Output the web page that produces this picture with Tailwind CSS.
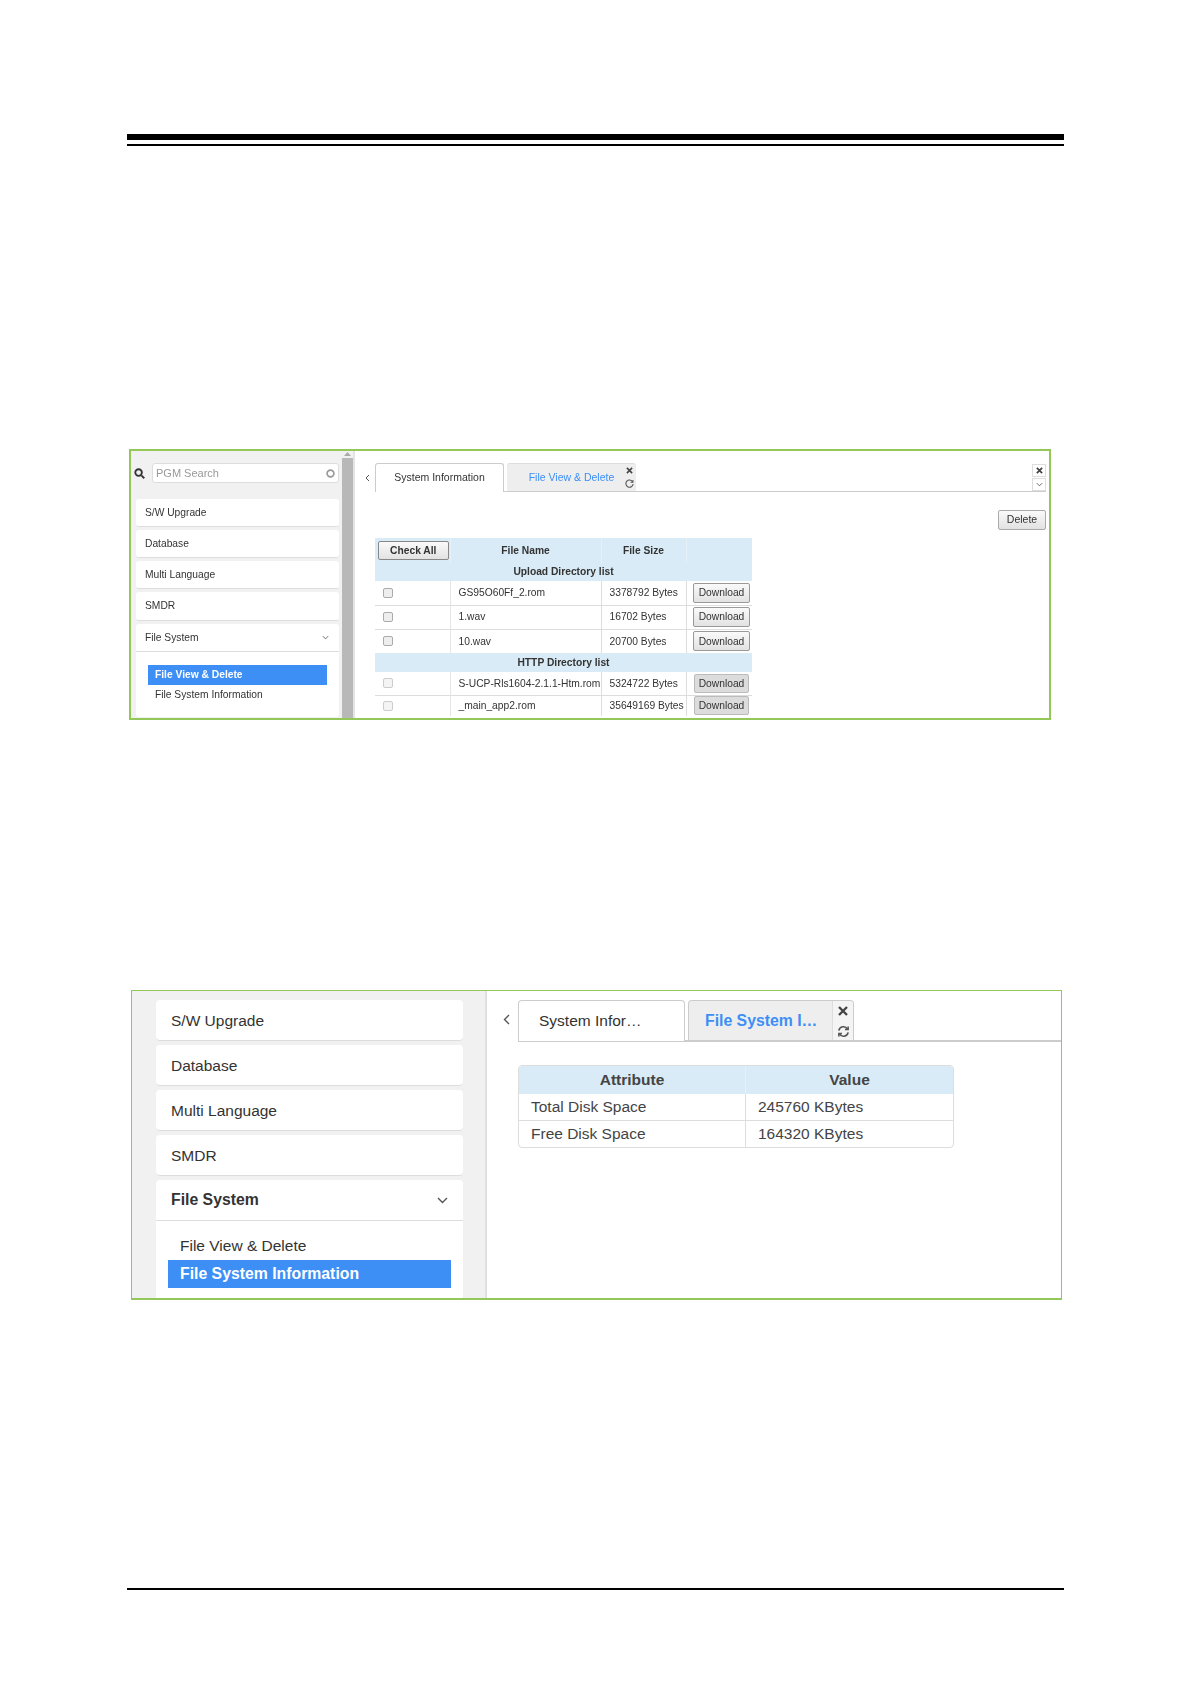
<!DOCTYPE html>
<html lang="en">
<head>
    <meta charset="UTF-8">
    <title>File System</title>
    <script src="https://cdn.jsdelivr.net/npm/@tailwindcss/browser@4"></script>
</head>
<body class="bg-white font-['Liberation_Sans',Arial,sans-serif] text-[#333]">
    <div class="w-[1191px] h-[1684px] pt-[134px] overflow-hidden">
        <!-- page header rule -->
        <div class="mx-[127px] h-[6px] bg-black"></div>
        <div class="mx-[127px] mt-[4px] h-[2px] bg-black"></div>

        <!-- File View & Delete -->
        <div class="ml-[129px] mt-[303px] w-[922px] h-[271px] border-2 border-[#93c757] flex overflow-hidden text-[10.25px]">
            <div class="w-[211px] bg-[#f1f1f1] pl-[5px] pr-[3px] pt-[12px] shrink-0 blur-[0.3px]">
                <div class="flex items-center h-[20px] ml-[-2px]">
                    <svg class="w-[11px] h-[11px] shrink-0" viewBox="0 0 12 12" fill="none" stroke="#333" stroke-width="2"><circle cx="5" cy="5" r="3.6"/><path d="M8 8l3.2 3.2"/></svg>
                    <div class="ml-[7px] flex-1 h-[20px] bg-white border border-[#ddd] rounded-[3px] flex items-center justify-between pl-[3px] pr-[3px] text-[11px] text-[#999]">
                        <span>PGM Search</span>
                        <svg class="w-[9px] h-[9px]" viewBox="0 0 10 10" fill="none" stroke="#999" stroke-width="1.8"><circle cx="5" cy="5" r="3.8"/></svg>
                    </div>
                </div>
                <div class="mt-[16px] flex flex-col gap-[3px]">
                    <div class="h-[28px] bg-white rounded-[3px] border-b border-[#ddd] flex items-center pl-[9px]">S/W Upgrade</div>
                    <div class="h-[28px] bg-white rounded-[3px] border-b border-[#ddd] flex items-center pl-[9px]">Database</div>
                    <div class="h-[28px] bg-white rounded-[3px] border-b border-[#ddd] flex items-center pl-[9px]">Multi Language</div>
                    <div class="h-[29px] bg-white rounded-[3px] border-b border-[#ddd] flex items-center pl-[9px]">SMDR</div>
                    <div class="bg-white rounded-[3px] h-[93px]">
                        <div class="h-[28px] border-b border-[#ddd] flex items-center justify-between pl-[9px] pr-[10px]">
                            <span>File System</span>
                            <svg class="w-[7px] h-[5px]" viewBox="0 0 8 5" fill="none" stroke="#555"><path d="M1 1l3 3 3-3"/></svg>
                        </div>
                        <div class="mt-[13px] mx-[12px] h-[20px] bg-[#3d8ff5] text-white font-bold flex items-center pl-[7px]">File View &amp; Delete</div>
                        <div class="mx-[12px] h-[20px] flex items-center pl-[7px]">File System Information</div>
                    </div>
                </div>
            </div>
            <div class="w-[11px] bg-[#f1f1f1] shrink-0 flex flex-col">
                <div class="h-[7px] flex justify-center pt-[1px]">
                    <svg class="w-[7px] h-[4px]" viewBox="0 0 7 4"><path d="M3.5 0L7 4H0z" fill="#aaa"/></svg>
                </div>
                <div class="flex-1 bg-[#b8b8b8]"></div>
            </div>
            <div class="w-[2px] bg-[#e4e4e4] shrink-0"></div>
            <div class="flex-1 pt-[12px] pl-[20px] pr-[3px] blur-[0.3px]">
                <div class="relative flex h-[29px] border-b border-[#ccc] text-[10.5px]">
                    <svg class="absolute left-[-10px] top-[11px] w-[5px] h-[8px]" viewBox="0 0 5 8" fill="none" stroke="#555"><path d="M4 1L1 4l3 3"/></svg>
                    <div class="w-[129px] h-[29px] bg-white border border-[#ccc] border-b-0 rounded-t-[3px] flex items-center justify-center">System Information</div>
                    <div class="ml-[3px] w-[129px] h-[28px] bg-[#eee] border-t border-[#ddd] rounded-t-[3px] flex items-center">
                        <span class="flex-1 text-center pl-[14px] text-[#3d8ff5]">File View &amp; Delete</span>
                        <div class="w-[14px] h-full flex flex-col items-center justify-around">
                            <svg class="w-[7px] h-[7px]" viewBox="0 0 8 8" fill="none" stroke="#444" stroke-width="1.8"><path d="M1 1l6 6M7 1L1 7"/></svg>
                            <svg class="w-[9px] h-[9px]" viewBox="0 0 10 10" fill="none" stroke="#555" stroke-width="1.2"><path d="M8.5 3.2A4 4 0 1 0 9 5.5"/><path d="M8.8 1v2.6H6.2"/></svg>
                        </div>
                    </div>
                    <div class="absolute right-0 top-[1px] flex flex-col gap-[1px]">
                        <div class="w-[14px] h-[13px] border border-[#ddd] flex items-center justify-center bg-white">
                            <svg class="w-[7px] h-[7px]" viewBox="0 0 8 8" fill="none" stroke="#444" stroke-width="2"><path d="M1 1l6 6M7 1L1 7"/></svg>
                        </div>
                        <div class="w-[14px] h-[13px] border border-[#ddd] flex items-center justify-center bg-white">
                            <svg class="w-[7px] h-[5px]" viewBox="0 0 8 5" fill="none" stroke="#555"><path d="M1 1l3 3 3-3"/></svg>
                        </div>
                    </div>
                </div>
                <div class="flex justify-end mt-[18px]">
                    <button class="w-[48px] h-[20px] border border-[#aaa] rounded-[2px] bg-linear-to-b from-[#fafafa] to-[#e2e2e2] text-[10.5px]">Delete</button>
                </div>
                <table class="mt-[8px] w-[377px] table-fixed border-collapse text-[10.25px]">
                    <colgroup>
                        <col class="w-[75px]"><col class="w-[151px]"><col class="w-[85px]"><col class="w-[66px]">
                    </colgroup>
                    <tbody>
                        <tr class="h-[25px] bg-[#d9ebf6] font-bold text-center">
                            <td class="pl-[2px] border-r border-[#e6f0f7]"><button class="w-[71px] h-[19px] border border-[#888] rounded-[2px] bg-linear-to-b from-[#fafafa] to-[#e2e2e2] font-bold">Check All</button></td>
                            <td class="border-r border-[#e6f0f7]">File Name</td>
                            <td class="border-r border-[#e6f0f7]">File Size</td>
                            <td></td>
                        </tr>
                        <tr class="h-[18px] bg-[#d9ebf6] font-bold text-center"><td colspan="4">Upload Directory list</td></tr>
                        <tr class="h-[24px] border-b border-[#ddd]">
                            <td class="pl-[8px] border-r border-[#e5e5e5]"><input type="checkbox" class="appearance-none block w-[10px] h-[10px] bg-[#eee] border border-[#aaa] rounded-[2px]"></td>
                            <td class="pl-[8px] border-r border-[#ddd]">GS95O60Ff_2.rom</td>
                            <td class="pl-[8px] border-r border-[#ddd] whitespace-nowrap">3378792 Bytes</td>
                            <td class="text-right pr-[2px]"><button class="w-[57px] h-[20px] border border-[#999] rounded-[2px] bg-linear-to-b from-[#fafafa] to-[#e2e2e2]">Download</button></td>
                        </tr>
                        <tr class="h-[24px] border-b border-[#ddd]">
                            <td class="pl-[8px] border-r border-[#e5e5e5]"><input type="checkbox" class="appearance-none block w-[10px] h-[10px] bg-[#eee] border border-[#aaa] rounded-[2px]"></td>
                            <td class="pl-[8px] border-r border-[#ddd]">1.wav</td>
                            <td class="pl-[8px] border-r border-[#ddd] whitespace-nowrap">16702 Bytes</td>
                            <td class="text-right pr-[2px]"><button class="w-[57px] h-[20px] border border-[#999] rounded-[2px] bg-linear-to-b from-[#fafafa] to-[#e2e2e2]">Download</button></td>
                        </tr>
                        <tr class="h-[24px]">
                            <td class="pl-[8px] border-r border-[#e5e5e5]"><input type="checkbox" class="appearance-none block w-[10px] h-[10px] bg-[#eee] border border-[#aaa] rounded-[2px]"></td>
                            <td class="pl-[8px] border-r border-[#ddd]">10.wav</td>
                            <td class="pl-[8px] border-r border-[#ddd] whitespace-nowrap">20700 Bytes</td>
                            <td class="text-right pr-[2px]"><button class="w-[57px] h-[20px] border border-[#999] rounded-[2px] bg-linear-to-b from-[#fafafa] to-[#e2e2e2]">Download</button></td>
                        </tr>
                        <tr class="h-[19px] bg-[#d9ebf6] font-bold text-center"><td colspan="4">HTTP Directory list</td></tr>
                        <tr class="h-[23px] border-b border-[#ddd]">
                            <td class="pl-[8px] border-r border-[#e5e5e5]"><input type="checkbox" class="appearance-none block w-[10px] h-[10px] bg-[#f4f4f4] border border-[#ccc] rounded-[2px]"></td>
                            <td class="pl-[8px] border-r border-[#ddd] whitespace-nowrap">S-UCP-Rls1604-2.1.1-Htm.rom</td>
                            <td class="pl-[8px] border-r border-[#ddd] whitespace-nowrap">5324722 Bytes</td>
                            <td class="text-right pr-[3px]"><button class="w-[55px] h-[19px] border border-[#bbb] rounded-[2px] bg-[#dcdcdc]">Download</button></td>
                        </tr>
                        <tr class="h-[21px]">
                            <td class="pl-[8px] border-r border-[#e5e5e5]"><input type="checkbox" class="appearance-none block w-[10px] h-[10px] bg-[#f4f4f4] border border-[#ccc] rounded-[2px]"></td>
                            <td class="pl-[8px] border-r border-[#ddd]">_main_app2.rom</td>
                            <td class="pl-[8px] border-r border-[#ddd] whitespace-nowrap">35649169 Bytes</td>
                            <td class="text-right pr-[3px]"><button class="w-[55px] h-[19px] border border-[#bbb] rounded-[2px] bg-[#dcdcdc]">Download</button></td>
                        </tr>
                    </tbody>
                </table>
            </div>
        </div>

        <!-- File System Information -->
        <div class="ml-[131px] mt-[270px] w-[931px] h-[310px] border border-b-2 border-[#93c757] flex overflow-hidden text-[15.5px]">
            <div class="w-[355px] h-full bg-[#f1f1f1] border-r-2 border-[#e0e0e0] pl-[24px] pr-[22px] pt-[9px] shrink-0">
                <div class="flex flex-col gap-[4px]">
                    <div class="h-[41px] bg-white rounded-[4px] border-b border-[#ddd] flex items-center pl-[15px] pt-[1px]">S/W Upgrade</div>
                    <div class="h-[41px] bg-white rounded-[4px] border-b border-[#ddd] flex items-center pl-[15px] pt-[1px]">Database</div>
                    <div class="h-[41px] bg-white rounded-[4px] border-b border-[#ddd] flex items-center pl-[15px] pt-[1px]">Multi Language</div>
                    <div class="h-[41px] bg-white rounded-[4px] border-b border-[#ddd] flex items-center pl-[15px] pt-[1px]">SMDR</div>
                    <div class="bg-white rounded-[4px] h-[120px]">
                        <div class="h-[41px] border-b border-[#ddd] flex items-center justify-between pl-[15px] pr-[15px] font-bold text-[15.8px]">
                            <span>File System</span>
                            <svg class="w-[11px] h-[7px]" viewBox="0 0 11 7" fill="none" stroke="#555" stroke-width="1.4"><path d="M1 1l4.5 4.5L10 1"/></svg>
                        </div>
                        <div class="mt-[11px] mx-[12px] h-[28px] flex items-center pl-[12px]">File View &amp; Delete</div>
                        <div class="mx-[12px] h-[28px] bg-[#3d8ff5] text-white font-bold text-[15.8px] flex items-center pl-[12px]">File System Information</div>
                    </div>
                </div>
            </div>
            <div class="flex-1 pt-[9px] pl-[31px]">
                <div class="relative flex h-[42px] border-b-2 border-[#ccc]">
                    <svg class="absolute left-[-15px] top-[14px] w-[7px] h-[11px]" viewBox="0 0 7 11" fill="none" stroke="#555" stroke-width="1.4"><path d="M6 1L1.5 5.5 6 10"/></svg>
                    <div class="w-[167px] h-[41px] bg-white border border-[#ccc] border-b-0 rounded-t-[4px] flex items-center pl-[20px]">System Infor…</div>
                    <div class="ml-[3px] w-[166px] h-[40px] bg-[#eee] border border-[#ccc] border-b-0 rounded-t-[4px] overflow-hidden flex items-center">
                        <span class="flex-1 pl-[16px] text-[#3d8ff5] font-bold text-[15.8px]">File System I…</span>
                        <div class="w-[21px] h-full border-l border-[#ddd] bg-[#f4f4f4] flex flex-col items-center pt-[5px] gap-[9px]">
                            <svg class="w-[10px] h-[10px]" viewBox="0 0 10 10" fill="none" stroke="#444" stroke-width="2.4"><path d="M1 1l8 8M9 1L1 9"/></svg>
                            <svg class="w-[13px] h-[13px]" viewBox="0 0 14 14" fill="none" stroke="#555" stroke-width="1.7"><path d="M2 6a5 5 0 0 1 9.3-1.6"/><path d="M12 8a5 5 0 0 1-9.3 1.6"/><path d="M12 1.5v3.4H8.6M2 12.5V9.1h3.4"/></svg>
                        </div>
                    </div>
                </div>
                <table class="mt-[23px] w-[434px] table-fixed border-separate border-spacing-0 border border-[#ddd] rounded-[4px] overflow-hidden text-[15.5px] text-[#444]">
                    <colgroup>
                        <col class="w-[227px]"><col class="w-[207px]">
                    </colgroup>
                    <tbody>
                        <tr class="h-[28px] bg-[#d9ebf6] font-bold text-center">
                            <td class="border-r border-[#e6f0f7]">Attribute</td>
                            <td>Value</td>
                        </tr>
                        <tr class="h-[27px]">
                            <td class="pl-[12px] border-r border-b border-[#ddd]">Total Disk Space</td>
                            <td class="pl-[12px] border-b border-[#ddd]">245760 KBytes</td>
                        </tr>
                        <tr class="h-[26px]">
                            <td class="pl-[12px] border-r border-[#ddd]">Free Disk Space</td>
                            <td class="pl-[12px]">164320 KBytes</td>
                        </tr>
                    </tbody>
                </table>
            </div>
        </div>

        <!-- page footer rule -->
        <div class="mx-[127px] mt-[288px] h-[2px] bg-black"></div>
    </div>
</body>
</html>
